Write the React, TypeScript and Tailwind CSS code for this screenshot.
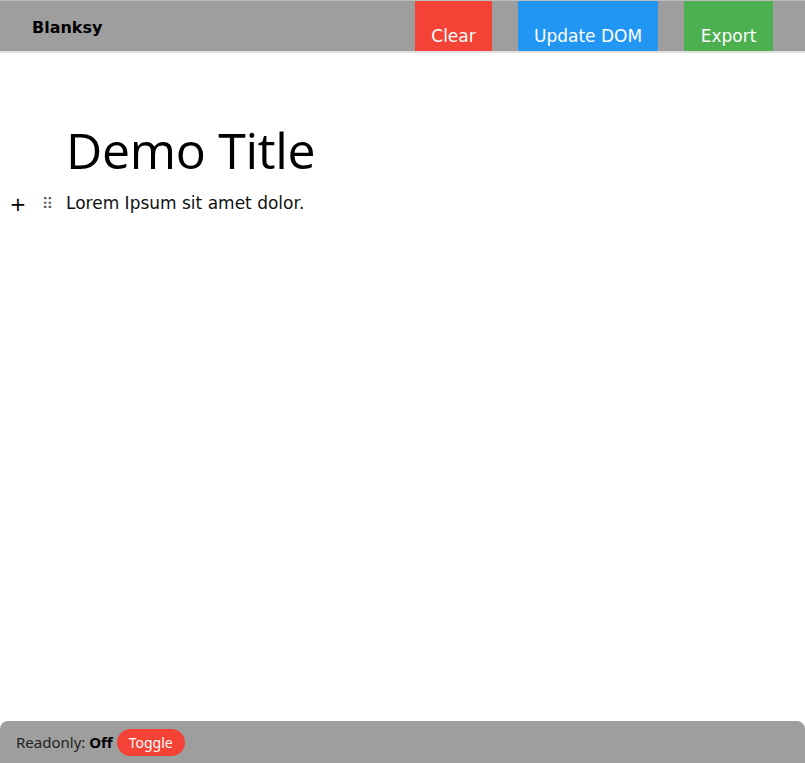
import { useState } from 'react'

const App = () => {
  const [readonly, setReadonly] = useState(false)

  return (
    <div className="min-h-[763px] flex flex-col bg-white font-['DejaVu_Sans',sans-serif]">
      <header className="flex items-stretch h-[53px] bg-[#9e9e9e] border-t border-[#bdbdbd] border-b-2 border-b-[#e0e0e0]">
        <div className="pl-[32px] pt-[19px] text-[16px] font-bold text-black leading-none">Blanksy</div>
        <div className="ml-auto flex items-stretch mr-[32px]">
          <button className="w-[77px] bg-[#f44336] text-white text-[17px] pt-[22px]">Clear</button>
          <button className="ml-[26px] w-[140px] bg-[#2196f3] text-white text-[17px] pt-[22px]">Update DOM</button>
          <button className="ml-[26px] w-[89px] bg-[#4caf50] text-white text-[17px] pt-[22px]">Export</button>
        </div>
      </header>

      <main className="flex-1 pt-[68px]">
        <h1 className="pl-[66px] text-[50px] leading-[58px] text-black font-['Open_Sans',sans-serif] font-normal tracking-[-0.3px]">
          Demo Title
        </h1>
        <div className="mt-[13px] flex items-center h-[24px]">
          <span className="w-[36px] text-center text-[20px] leading-none text-black">+</span>
          <span className="w-[30px] pl-[6px] text-[15px] leading-none text-[#555]">⠿</span>
          <p className="text-[17px] text-[#111]">Lorem Ipsum sit amet dolor.</p>
        </div>
      </main>

      <footer className="h-[42px] bg-[#9e9e9e] rounded-t-[8px] flex items-center pl-[16px] gap-[4px] font-['Noto_Sans',sans-serif] text-[15px] text-[#222]">
        <span>
          Readonly: <b className="text-black">{readonly ? 'On' : 'Off'}</b>
        </span>
        <button
          onClick={() => setReadonly(v => !v)}
          className="h-[27px] px-[12px] rounded-full bg-[#f44336] text-white text-[14px]"
        >
          Toggle
        </button>
      </footer>
    </div>
  )
}

export default App
